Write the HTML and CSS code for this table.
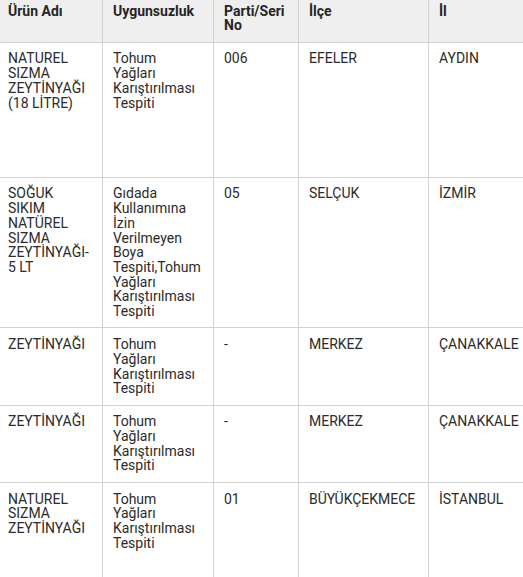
FILE: index.html
```html
<!DOCTYPE html>
<html lang="tr">
<head>
<meta charset="utf-8">
<title>Uygunsuz Ürünler</title>
<link rel="stylesheet" href="styles.css">
</head>
<body>
<div class="viewport">
<table class="data">
<colgroup>
<col class="c1"><col class="c2"><col class="c3"><col class="c4"><col class="c5">
</colgroup>
<thead>
<tr><th>Ürün Adı</th><th>Uygunsuzluk</th><th>Parti/Seri No</th><th>İlçe</th><th>İl</th></tr>
</thead>
<tbody>
<tr class="tall1"><td>NATUREL SIZMA ZEYTİNYAĞI (18 LİTRE)</td><td class="issue">Tohum Yağları Karıştırılması Tespiti</td><td>006</td><td>EFELER</td><td>AYDIN</td></tr>
<tr><td>SOĞUK SIKIM NATÜREL SIZMA ZEYTİNYAĞI-5 LT</td><td class="issue">Gıdada Kullanımına İzin Verilmeyen Boya Tespiti,Tohum Yağları Karıştırılması Tespiti</td><td>05</td><td>SELÇUK</td><td>İZMİR</td></tr>
<tr><td>ZEYTİNYAĞI</td><td class="issue">Tohum Yağları Karıştırılması Tespiti</td><td>-</td><td>MERKEZ</td><td>ÇANAKKALE</td></tr>
<tr><td>ZEYTİNYAĞI</td><td class="issue">Tohum Yağları Karıştırılması Tespiti</td><td>-</td><td>MERKEZ</td><td>ÇANAKKALE</td></tr>
<tr class="tall5"><td>NATUREL SIZMA ZEYTİNYAĞI</td><td class="issue">Tohum Yağları Karıştırılması Tespiti</td><td>01</td><td>BÜYÜKÇEKMECE</td><td>İSTANBUL</td></tr>
</tbody>
</table>
</div>
</body>
</html>
```
FILE: styles.css
```css
html, body {
  margin: 0;
  padding: 0;
  background: #ffffff;
}
.viewport {
  width: 523px;
  height: 577px;
  overflow: hidden;
}
.data {
  margin: -6px 0 0 -3px;
  border-collapse: collapse;
  table-layout: fixed;
  width: 690px;
  font-family: Roboto, "Liberation Sans", Arial, sans-serif;
  font-size: 14px;
  line-height: 14.7px;
  color: #2b2b2b;
}
.c1 { width: 105px; }
.c2 { width: 111px; }
.c3 { width: 85px; }
.c4 { width: 130px; }
.c5 { width: 259px; }
.data th,
.data td {
  border: 1px solid #d2d2d2;
  padding: 8.7px 10px;
  text-align: left;
  vertical-align: top;
}
.data td.issue {
  padding-right: 12.6px;
}
.data th {
  background: #efefef;
  font-weight: 700;
  color: #262626;
}
.tall1 { height: 135px; }
.tall5 { height: 150px; }
```
